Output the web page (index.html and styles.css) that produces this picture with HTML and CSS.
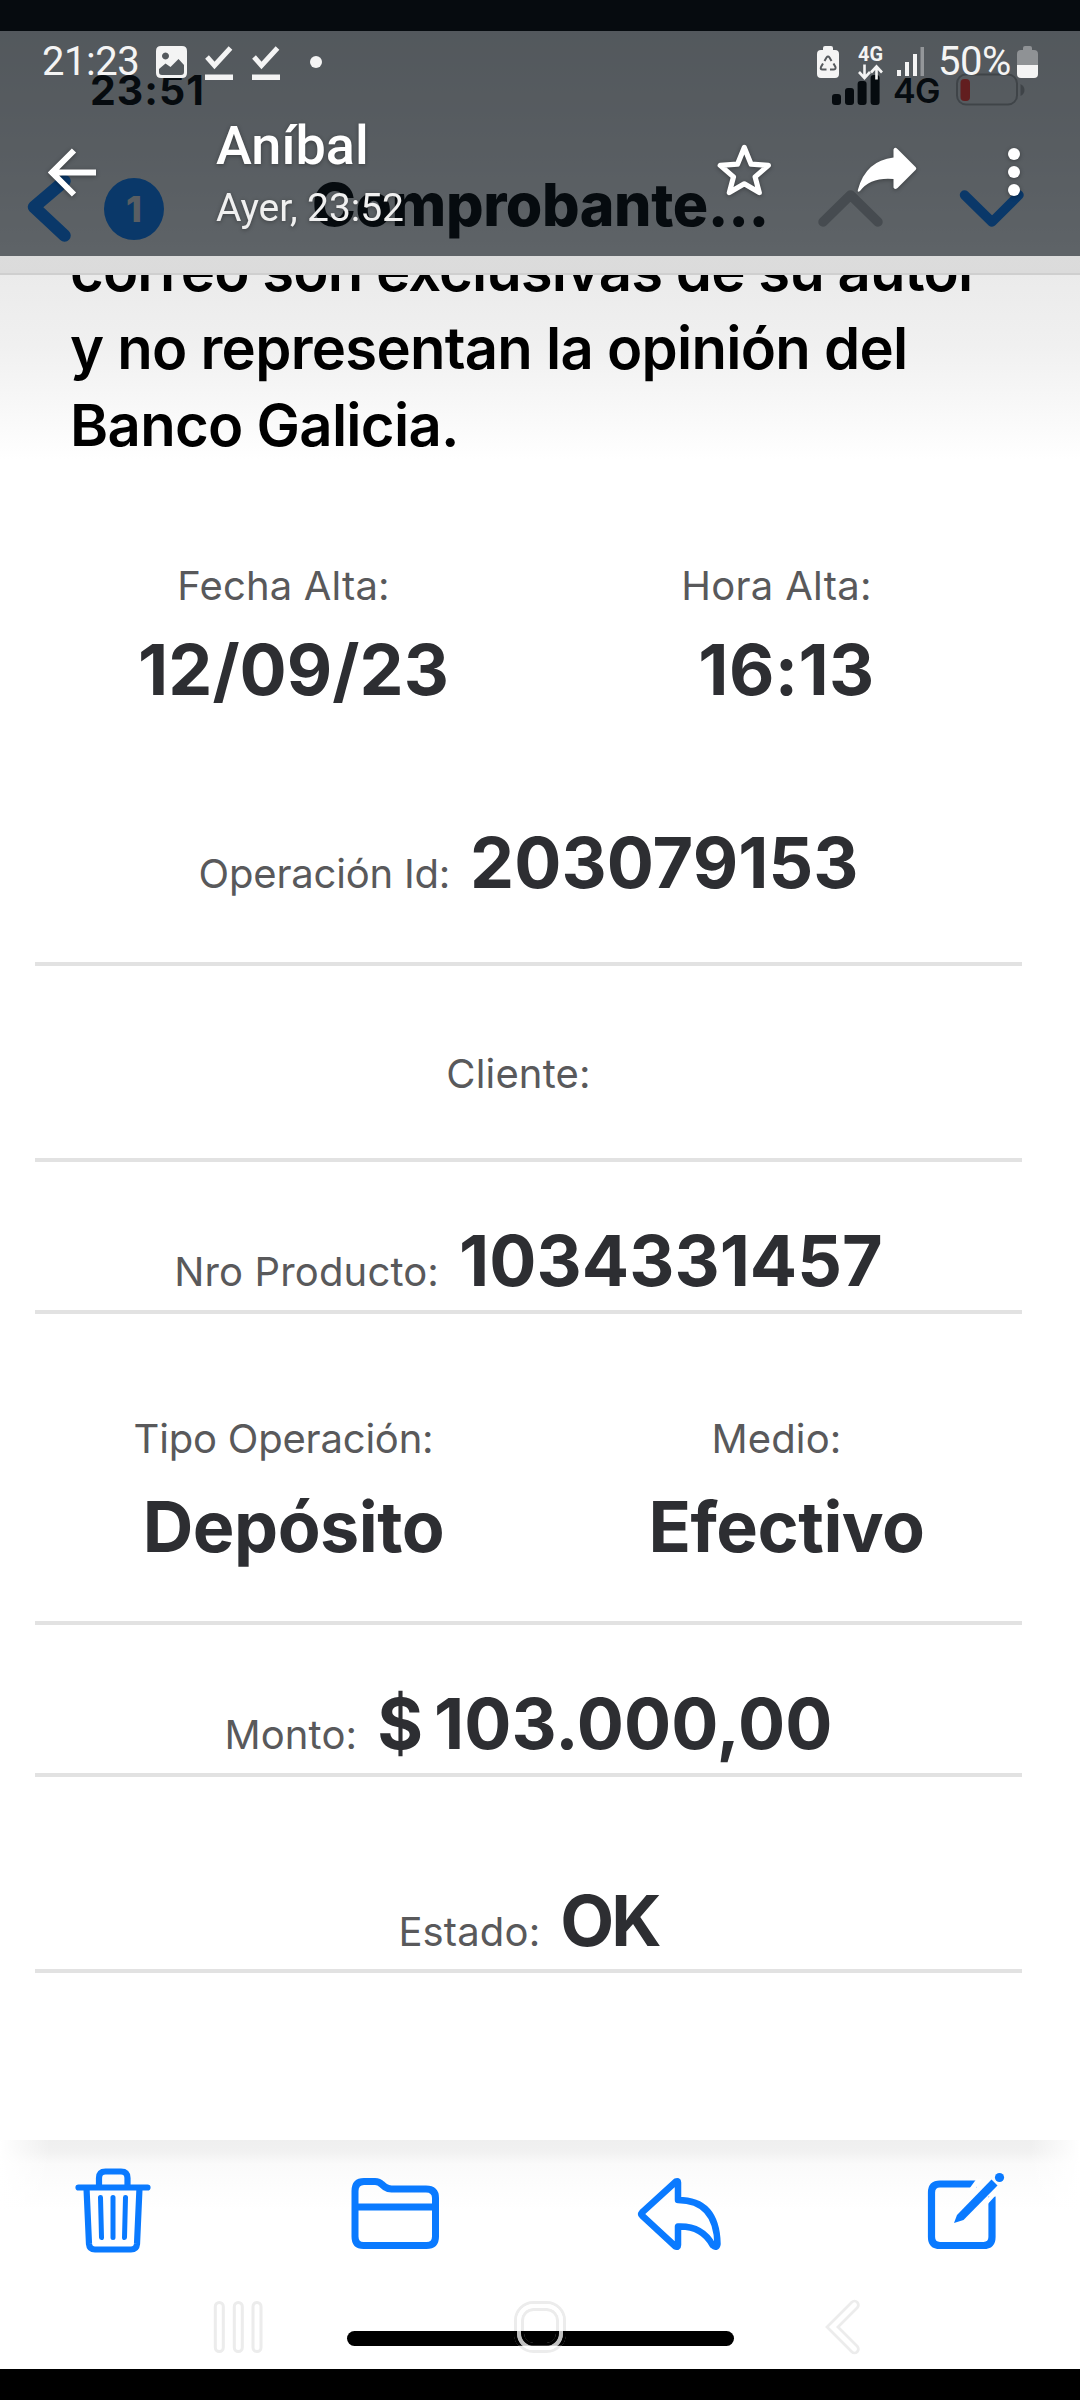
FILE: index.html
```html
<!DOCTYPE html>
<html lang="es">
<head>
<meta charset="utf-8">
<title>Comprobante</title>
<link rel="stylesheet" href="styles.css">
</head>
<body>
<div class="screen">
  <main class="mail">
    <div class="ios-status">
      <span class="ios-time">23:51</span>
      <svg class="ios-signal" width="48" height="30" viewBox="832 75 48 30"><rect x="832" y="94" width="9" height="11" rx="3"/><rect x="845" y="88" width="9" height="17" rx="3"/><rect x="857.6" y="81" width="9" height="24" rx="3"/><rect x="870.6" y="75" width="9" height="30" rx="3"/></svg>
      <span class="ios-net">4G</span>
      <svg width="70" height="34" viewBox="955 73 70 34"><rect x="957" y="74.5" width="60" height="30" rx="9" fill="none" stroke="#8f8f90" stroke-width="2"/><rect x="960.5" y="79" width="9.5" height="22" rx="4" fill="#e5302a"/><path d="M1020.500 84q4 2 4 6t-4 6z" fill="#8f8f90"/></svg>
    </div>
    <div class="ios-nav">
      <svg class="ios-back" width="46" height="72" viewBox="26 172 46 72"><path d="M64.500 181L34 207l30.500 28.500" /></svg>
      <span class="badge">1</span>
      <h1 class="ios-title">Comprobante...</h1>
      <svg class="ios-up" width="66" height="38" viewBox="817 190 66 38"><path d="M823 223l27.500-27 27.500 27"/></svg>
      <svg class="ios-down" width="66" height="38" viewBox="959 190 66 38"><path d="M964.500 196l27.500 27 27-27"/></svg>
    </div>
    <article class="message">
      <p class="disclaimer"><span class="l1">correo son exclusivas de su autor</span><span class="l2">y no representan la opinión del</span><span class="l3">Banco Galicia.</span></p>
      <div class="receipt">
        <div class="pair pair-date">
          <div class="field"><span class="label">Fecha Alta:</span><span class="value">12/09/23</span></div>
          <div class="field"><span class="label loose">Hora Alta:</span><span class="value wide">16:13</span></div>
        </div>
        <div class="row row-op"><span class="label tight">Operación Id:</span><span class="value">203079153</span></div>
        <div class="row row-client"><span class="label solo">Cliente:</span></div>
        <div class="row row-product"><span class="label">Nro Producto:</span><span class="value">1034331457</span></div>
        <div class="pair pair-type">
          <div class="field"><span class="label tight">Tipo Operación:</span><span class="value narrow">Depósito</span></div>
          <div class="field"><span class="label">Medio:</span><span class="value narrow">Efectivo</span></div>
        </div>
        <div class="row row-amount"><span class="label">Monto:</span><span class="value amount">$ 103.000,00</span></div>
        <div class="row row-state"><span class="label">Estado:</span><span class="value ok">OK</span></div>
      </div>
    </article>
    <footer class="toolbar">
      <svg class="t-trash" width="76" height="87" viewBox="75 2166 76 87"><path stroke-width="6.200" d="M78.500 2187.500h69M99 2187v-9q0-6.500 6.500-6.500h15.500q6.500 0 6.500 6.500v9M86.500 2188l2.500 56q.5 5.500 6 5.500h36q5.500 0 6-5.500l2.500-56"/><path stroke-width="5" d="M100.500 2197.500l1 40M113 2197.500v40M125.500 2197.500l-1 40"/></svg>
      <svg class="t-folder" width="90" height="74" viewBox="350 2176 90 74"><path stroke-width="7" d="M355 2191q0-9.500 9-9.500h11q4 0 7 3l3 2.500q3 2 6.500 2h34.500q9.500 0 9.500 9v38.500q0 9-9 9h-63q-8.500 0-8.500-9zM355 2207h80"/></svg>
      <svg class="t-reply" width="84" height="74" viewBox="637 2176 84 74"><path stroke-width="6.500" d="M678 2182.500q0-2-2-1L642 2212.500q-1.500 1.500 0 3l33.500 31q2.500 1 2.500-1.500v-18.500q24-1 34.500 18.500 4.500 4 5-1-1-44-39.500-44z"/></svg>
      <svg class="t-compose" width="78" height="79" viewBox="927 2171 78 79"><path stroke-width="7.200" stroke-linecap="butt" d="M976.500 2184h-36.500q-8.500 0-8.500 8.500v44.500q0 8.500 8.500 8.500h43.500q8.500 0 8.500-8.500v-40.500"/><path fill="#fff" stroke="none" d="M974 2190.500l8-11h-6l-8 11zM986 2206l10-11v-6l-10 11z"/><path fill="#0a7aff" stroke="none" d="M954 2223l3-8 34.500-35.500 6 6-34 34.500z"/><circle cx="999.500" cy="2177.500" r="4.600" fill="#0a7aff" stroke="none"/></svg>
    </footer>
  </main>

  <header class="viewer">
    <div class="status">
      <span class="clock">21:23</span>
      <svg class="s-img" width="31" height="32" viewBox="156 46 31 32"><path fill-rule="evenodd" fill="#f4f4f4" d="M161 46h21q5 0 5 5v22q0 5-5 5h-21q-5 0-5-5V51q0-5 5-5zM165.500 52.500a3.500 3.500 0 1 0 .01 0zM159 69v3q0 3 3 3h19q3 0 3-3v-7l-5.500-6-8 8-5-3.500z"/></svg>
      <svg class="s-check" width="29" height="35" viewBox="205 45 29 35"><path fill="none" stroke="#f4f4f4" stroke-width="5" d="M207 57l7.500 8.500L230.500 48"/><path fill="#f4f4f4" d="M205 74.500h28v5.500h-28z"/></svg>
      <svg class="s-check" width="29" height="35" viewBox="205 45 29 35"><path fill="none" stroke="#f4f4f4" stroke-width="5" d="M207 57l7.500 8.500L230.500 48"/><path fill="#f4f4f4" d="M205 74.500h28v5.500h-28z"/></svg>
      <i class="dot"></i>
      <svg class="s-eco" width="22" height="32" viewBox="0 0 22 32"><path fill="#f4f4f4" d="M6 4V2q0-2 2-2h6q2 0 2 2v2h2q4 0 4 4v20q0 4-4 4H4q-4 0-4-4V8q0-4 4-4z"/><path fill="none" stroke="#55595d" stroke-width="2" d="M7.500 15l2-3.500q1.500-2 3 0l2 3.500M16.500 17.500l2 3.500q.5 2.500-2 2.500h-3.500M9.500 23.500h-4q-2.500 0-1.500-2.500l2-3.500"/></svg>
      <svg class="s-data" width="26" height="34" viewBox="858 45 26 34"><text x="858" y="60" textLength="25" lengthAdjust="spacingAndGlyphs">4G</text><path fill="none" stroke="#f4f4f4" stroke-width="2.600" d="M864.500 63.500v13M859 71l5.500 6 5.500-6M876.500 78.500v-13M871 71.500l5.500-6 5.500 6"/></svg>
      <svg class="s-sig" width="27" height="30" viewBox="897 46 27 30"><path fill="#f4f4f4" d="M897 69h4v6h-4zM905 61h4v14h-4zM913 53h4v22h-4z"/><path fill="#94979a" d="M920.500 46h3.500v29h-3.500z"/></svg>
      <span class="pct">50%</span>
      <svg class="s-bat" width="21" height="32" viewBox="0 0 21 32"><path fill="#8f9295" d="M6 4V2q0-2 2-2h5q2 0 2 2v2h2q4 0 4 4v11H0V8q0-4 4-4z"/><path fill="#f4f4f4" d="M0 19h21v9q0 4-4 4H4q-4 0-4-4z"/></svg>
    </div>
    <div class="bar">
      <svg class="b-back" width="48" height="49" viewBox="48 147.500 48 49"><path fill="none" stroke="#fff" stroke-width="6" d="M96 172H53M74 150L52 172l22 22"/></svg>
      <div class="who"><strong>Aníbal</strong><span>Ayer, 23:52</span></div>
      <svg class="b-star" width="54" height="54" viewBox="717 143 54 54"><path fill="none" stroke="#fff" stroke-width="5.200" stroke-linejoin="round" d="M744.300 147.500l6.800 16.700 17.300 1.200-13.300 11.500 4.200 15.700-15-8.800-15 8.800 4.200-15.700-13.300-11.500 17.300-1.200z"/></svg>
      <svg class="b-share" width="60" height="48" viewBox="857 146 60 48"><path fill="#fff" d="M893.500 149.500q1-3 4-.5l18 18q1.500 1.500 0 3l-18 18q-3 2-4-.5v-8.500q-23-2-33.500 12-3 2-2-1.500 8-29 35.500-32z"/></svg>
      <svg class="b-more" width="12" height="48" viewBox="0 0 12 48"><g fill="#fff"><circle cx="6" cy="6" r="6"/><circle cx="6" cy="24" r="6"/><circle cx="6" cy="42" r="6"/></g></svg>
    </div>
  </header>

  <div class="home-indicator"></div>
  <nav class="android-nav">
    <svg class="n-recent" width="50" height="54" viewBox="213 2300 50 54"><g fill="#fff" stroke="#ececec" stroke-width="3"><rect x="215.300" y="2302.500" width="8" height="49" rx="4"/><rect x="234.300" y="2302.500" width="8" height="49" rx="4"/><rect x="253" y="2302.500" width="8" height="49" rx="4"/></g></svg>
    <svg class="n-home" width="54" height="54" viewBox="513 2300 54 54"><clipPath id="over"><path d="M513 2331h54v14.800h-54z"/></clipPath><g fill="none"><rect x="515.500" y="2302.500" width="49" height="49" rx="18" stroke="#ececec" stroke-width="3"/><rect x="522.500" y="2309.500" width="35" height="35" rx="11" stroke="#ececec" stroke-width="3"/><rect x="519" y="2306" width="42" height="42" rx="14.500" stroke="#fff" stroke-width="4"/><g clip-path="url(#over)"><rect x="515.500" y="2302.500" width="49" height="49" rx="18" stroke="#000" stroke-width="3.400"/><rect x="522.500" y="2309.500" width="35" height="35" rx="11" stroke="#000" stroke-width="3.400"/><rect x="519" y="2306" width="42" height="42" rx="14.500" stroke="#bfbfbf" stroke-width="4"/></g></g></svg>
    <svg class="n-back" width="36" height="58" viewBox="825 2298 36 58"><path fill="none" stroke="#ececec" stroke-width="10.500" stroke-linecap="round" d="M854.500 2305l-22 22 22 22"/><path fill="none" stroke="#fff" stroke-width="5" stroke-linecap="round" d="M854.500 2305l-22 22 22 22"/></svg>
  </nav>
</div>
</body>
</html>
```
FILE: styles.css
```css
* { box-sizing: border-box; }
body { margin: 0; background: #000; }
svg { display: block; flex: none; }
p, h1 { margin: 0; }

.screen { position: relative; width: 1080px; height: 2400px; overflow: hidden; font-family: Inter, "Liberation Sans", sans-serif; }

/* Photographed mail app */
.mail { display: flex; flex-direction: column; height: 2369px; padding-top: 31px; background: #000; }

.ios-status { display: flex; align-items: center; height: 118px; padding-left: 90px; background: linear-gradient(#c0c1c2, #cdcdce); }
.ios-time { width: 742px; font-size: 41px; font-weight: 700; letter-spacing: 1px; line-height: 118px; }
.ios-net { margin: 0 14px 0 13px; width: 48px; font-size: 34px; font-weight: 600; letter-spacing: -.6px; }

.ios-nav { display: flex; height: 126px; padding: 0 0 13px 26px; align-items: center; background: linear-gradient(#cdcdce, #dcdcdc 85%, #dbdbdb); border-bottom: 2px solid #cfcfcf; }
.ios-nav path { fill: none; stroke-linecap: round; stroke-linejoin: round; }
.ios-back path { stroke: #0a72e0; stroke-width: 12.5; }
.ios-back { margin-top: 6px; }
.badge { width: 60px; height: 62px; margin: 8px 0 0 32px; border-radius: 50%; background: #0a72e0; color: #cfd0d1; font-size: 36px; font-weight: 800; line-height: 62px; text-align: center; }
.ios-title { width: 470px; margin-left: 148px; font-size: 59px; font-weight: 800; letter-spacing: -.4px; line-height: 115px; }
.ios-up { margin: 7px 0 0 35px; }
.ios-up path { stroke: #a0a1a2; stroke-width: 9.5; }
.ios-down { margin: 7px 0 0 76px; }
.ios-down path { stroke: #0a72e0; stroke-width: 9.5; }

.message { height: 1865px; overflow: hidden; background: linear-gradient(#ebebeb, #f0f0f0 70px, #fff 185px); }
.disclaimer { margin: -43px 0 0 70px; font-size: 58px; font-weight: 600; line-height: 77.7px; color: #000; }
.disclaimer span { display: block; white-space: nowrap; }
.l1 { letter-spacing: -.9px; }
.l2 { letter-spacing: -.72px; }
.l3 { letter-spacing: -.7px; }

.receipt { width: 987px; margin-left: 35px; }
.row { display: flex; justify-content: center; align-items: baseline; gap: 20px; border-bottom: 4px solid #e2e2e2; }
.pair { display: grid; grid-template-columns: 1fr 1fr; padding-left: 12px; margin-right: -11px; }
.field { display: flex; flex-direction: column; align-items: center; }
.label { font-size: 40px; font-weight: 400; line-height: 48px; letter-spacing: .15px; color: #59595b; }
.label.loose { letter-spacing: .3px; }
.label.tight { letter-spacing: -.2px; }
.field .label, .label.solo { margin-right: 20px; }
.value { font-size: 70px; font-weight: 700; line-height: 86px; margin-bottom: -2px; letter-spacing: .05px; color: #2d2e32; }
.value.wide { letter-spacing: .4px; }
.value.narrow { letter-spacing: -.5px; }
.value.amount { letter-spacing: .1px; word-spacing: -6px; }
.value.ok { letter-spacing: -3px; }

.pair-date { padding-top: 97px; }
.pair-date .field { gap: 17px; }
.row-op { padding: 109px 0 57.500px; }
.row-client { padding: 84.5px 0 60px; }
.row-product { padding: 56px 0 8px; }
.pair-type { padding-top: 101px; }
.pair-type .field { gap: 20.7px; }
.row-amount { margin-top: 53.500px; border-top: 4px solid #e2e2e2; padding: 55.5px 0 8.500px; }
.row-state { padding: 100.5px 0 7.500px; }

.toolbar { display: flex; flex: 1; align-items: flex-start; padding: 26px 0 0 75px; background: linear-gradient(90deg, #fff, transparent 50px, transparent 1030px, #fff), linear-gradient(#efefef, #f1f1f1 12px, #fafafa 24px, #fdfdfd 50px, #fff 70px) #fff; }
.toolbar svg { fill: none; stroke: #0a7aff; stroke-linecap: round; stroke-linejoin: round; }
.t-folder { margin: 10px 0 0 199px; }
.t-reply { margin: 10px 0 0 197px; }
.t-compose { margin: 5px 0 0 206px; }

/* Chat media viewer */
.viewer { position: absolute; inset: 0 0 auto; height: 256px; padding-top: 31px; background: rgba(10, 18, 25, .6); font-family: Roboto, "Noto Sans", sans-serif; color: #fff; }
.status { display: flex; align-items: center; height: 61px; padding-left: 42px; color: #f4f4f4; font-size: 40px; line-height: 61px; }
.clock { width: 114px; letter-spacing: -.5px; }
.s-check { margin: 2px 0 0 18px; }
.dot { width: 12px; height: 12px; margin-left: 29px; border-radius: 50%; background: #f4f4f4; }
.s-eco { margin-left: 495px; }
.s-data { margin: 2px 0 0 19px; }
.s-data text { font-size: 20px; font-weight: 700; fill: #f4f4f4; }
.s-sig { margin-left: 13px; }
.pct { width: 79px; margin-left: 14px; letter-spacing: -.5px; }
.bar { display: flex; align-items: center; height: 164px; padding: 0 0 4px 48px; }
.bar svg, .who { filter: drop-shadow(0 1px 2px rgba(0, 0, 0, .35)); }
.who { display: flex; flex-direction: column; gap: 7px; width: 501px; margin: 0 0 0 120px; }
.who strong { font-size: 54px; font-weight: 500; line-height: 64px; }
.who span { font-size: 39px; line-height: 46px; color: #f0f0f0; letter-spacing: -.08px; }
.b-star { margin-top: -4px; }
.b-share { margin: -4px 0 0 86px; }
.b-more { margin-left: 91px; }

/* Home indicator and navigation buttons lie over the mail toolbar */
.home-indicator { position: absolute; left: 347px; top: 2331px; width: 387px; height: 15px; border-radius: 8px; background: #000; }
.android-nav { position: absolute; inset: 2298px 0 31px; display: flex; align-items: flex-start; padding-left: 213px; }
.n-recent { margin-top: 2px; }
.n-home { margin: 2px 0 0 250px; }
.n-back { margin-left: 258px; }
```
